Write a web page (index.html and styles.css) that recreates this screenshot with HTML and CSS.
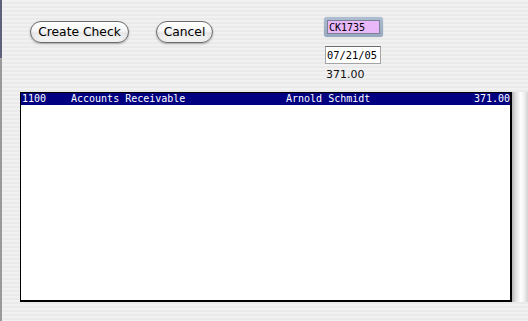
FILE: index.html
```html
<!DOCTYPE html>
<html lang="en">
<head>
  <meta charset="UTF-8">
  <title>Create Check</title>
  <link rel="stylesheet" href="styles.css">
</head>
<body>

  <div class="window">
    <div class="edge"></div>

    <div class="content">
      <div class="top">
        <div class="buttons">
          <button class="btn btn-create">Create Check</button>
          <button class="btn btn-cancel">Cancel</button>
        </div>

        <div class="fields">
          <div class="ring"><span class="check-no">CK1735</span></div>
          <span class="date">07/21/05</span>
          <span class="total">371.00</span>
        </div>
      </div>

      <div class="list-wrap">
        <div class="list">
          <div class="row selected">
            <span class="acct">1100</span>
            <span class="acct-name">Accounts Receivable</span>
            <span class="payee">Arnold Schmidt</span>
            <span class="amount">371.00</span>
          </div>
        </div>
        <div class="scroll"></div>
      </div>
    </div>
  </div>

</body>
</html>
```

FILE: styles.css
```css
* {
  box-sizing: border-box;
  margin: 0;
  padding: 0;
}

body {
  width: 528px;
  height: 321px;
  overflow: hidden;
  background: repeating-linear-gradient(#f1f1f1 0 2px, #eaeaea 2px 4px);
  font-family: "DejaVu Sans", sans-serif;
}

.window {
  display: flex;
  height: 321px;
}

.edge {
  width: 2px;
  background: linear-gradient(#5d6179 0 58px, #a0a0a0 58px 60px, #999 60px);
}

.content {
  flex: 1;
}

.top {
  display: flex;
  height: 92px;
}

.buttons {
  display: flex;
  gap: 27px;
  margin: 21px 0 0 28px;
  height: 22px;
}

.btn {
  height: 22px;
  border: 1px solid #6a6a6a;
  border-radius: 11px;
  background: linear-gradient(#ffffff 0%, #f6f6f6 45%, #e6e6e6 55%, #f4f4f4 85%, #ffffff 100%);
  box-shadow: 0 1px 2px rgba(0,0,0,0.3), inset 0 -2px 3px rgba(0,0,0,0.06);
  font-family: "DejaVu Sans", sans-serif;
  font-size: 12.3px;
  color: #000;
  line-height: 20px;
}

.btn-create {
  width: 99px;
}

.btn-cancel {
  width: 57px;
}

.fields {
  display: flex;
  flex-direction: column;
  align-items: flex-start;
  margin: 17px 0 0 111px;
}

.ring {
  width: 59px;
  height: 20px;
  padding: 3px;
  border-radius: 3px;
  background: linear-gradient(#aebdd0, #96a8be);
  box-shadow: 0 0 1px #8898b0;
}

.check-no, .date, .row {
  font-family: "DejaVu Sans Mono", monospace;
  font-size: 10px;
}

.check-no {
  display: block;
  height: 14px;
  border: 1px solid #7d8396;
  background: #e8b8fa;
  line-height: 13px;
  padding-left: 1px;
}

.date {
  width: 56px;
  height: 18px;
  margin: 9px 0 0 1px;
  border: 1px solid #a4a4a4;
  border-top-color: #6c6c6c;
  background: #fff;
  line-height: 17px;
  padding-left: 1px;
  font-size: 10.4px;
}

.total {
  margin: 4px 0 0 2px;
  font-size: 11px;
  line-height: 13px;
  color: #111;
}

.list-wrap {
  display: flex;
  margin-left: 18px;
  height: 210px;
}

.list {
  width: 492px;
  border: 1px solid #000;
  border-right-width: 2px;
  border-bottom-width: 2px;
  background: #fff;
}

.row {
  display: flex;
  height: 12px;
  line-height: 12px;
  white-space: pre;
}

.selected {
  background: #000080;
  color: #fff;
}

.acct {
  width: 50px;
  padding-left: 1px;
}

.acct-name {
  width: 215px;
}

.payee {
  flex: 1;
}

.scroll {
  width: 16px;
  background: linear-gradient(to right, #b4b4b4, #dcdcdc 20%, #ffffff 55%, #ececec 80%, #d2d2d2);
}
```
